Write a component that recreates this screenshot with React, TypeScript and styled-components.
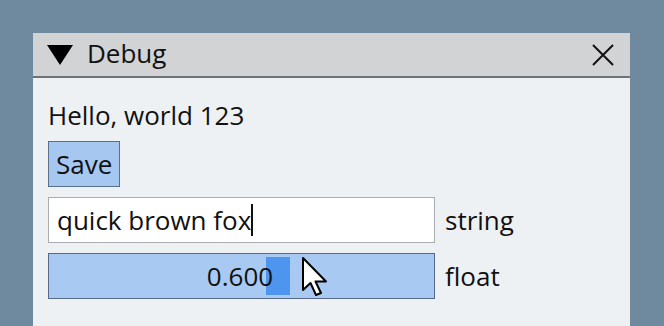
import React from "react";
import styled, { createGlobalStyle } from "styled-components";

const Global = createGlobalStyle`
  *, *::before, *::after { box-sizing: border-box; }
  html, body { margin: 0; padding: 0; }
  body {
    background: #6f8a9e;
    width: 664px;
    height: 326px;
    overflow: hidden;
    font-family: "Open Sans", "Noto Sans", sans-serif;
  }
`;

const Page = styled.div`
  padding: 33px 0 0 33px;
`;

const Window = styled.div`
  width: 597px;
  height: 300px;
  display: flex;
  flex-direction: column;
  background: #eef1f4;
`;

const TitleBar = styled.div`
  height: 45px;
  background: #d1d3d5;
  border-bottom: 2px solid #6f7377;
  display: flex;
  align-items: center;
  padding: 0 16px 0 14px;
  color: #111;
`;

const Triangle = styled.svg`
  width: 26px;
  height: 20px;
  margin-right: 14px;
`;

const Title = styled.span`
  font-size: 26px;
  flex: 1;
  line-height: 1;
  margin-top: -3px;
`;

const Close = styled.svg`
  width: 22px;
  height: 22px;
`;

const Body = styled.div`
  padding: 20px 15px 0 15px;
  display: flex;
  flex-direction: column;
  gap: 10px;
  font-size: 26px;
  color: #111;
`;

const TextLine = styled.div`
  line-height: 34px;
  height: 34px;
  margin-bottom: -1px;
`;

const Button = styled.div`
  align-self: flex-start;
  height: 46px;
  padding: 0 7px;
  background: #a6c8f0;
  border: 1px solid #59718f;
  display: flex;
  align-items: center;
`;

const Row = styled.div`
  display: flex;
  align-items: center;
  gap: 10px;
`;

const Field = styled.div<{ $variant: "text" | "slider" }>`
  position: relative;
  width: 387px;
  height: 46px;
  display: flex;
  align-items: center;
  justify-content: ${(p) => (p.$variant === "slider" ? "center" : "flex-start")};
  padding: ${(p) => (p.$variant === "slider" ? "0" : "0 8px")};
  background: ${(p) => (p.$variant === "slider" ? "#a8c9f1" : "#ffffff")};
  border: 1px solid ${(p) => (p.$variant === "slider" ? "#56698a" : "#a9adb2")};
`;

const Caret = styled.span`
  display: inline-block;
  width: 2px;
  height: 32px;
  background: #111;
`;

const Grab = styled.div`
  position: absolute;
  left: 217px;
  top: 3px;
  width: 24px;
  height: 38px;
  background: #4d95ee;
`;

const Value = styled.span`
  position: relative;
  margin-left: -3px;
`;

const Cursor = styled.svg`
  position: absolute;
  left: 252px;
  top: 2px;
  width: 30px;
  height: 42px;
`;

const Label = styled.span`
  line-height: 1;
`;

export default function App() {
  return (
    <>
      <Global />
      <Page>
        <Window>
          <TitleBar>
            <Triangle viewBox="0 0 26 20">
              <polygon points="0,0 26,0 13,20" fill="#000" />
            </Triangle>
            <Title>Debug</Title>
            <Close viewBox="0 0 22 22">
              <path d="M1 1 L21 21 M21 1 L1 21" stroke="#111" strokeWidth="2" />
            </Close>
          </TitleBar>
          <Body>
            <TextLine>Hello, world 123</TextLine>
            <Button>Save</Button>
            <Row>
              <Field $variant="text">
                <span>quick brown fox</span>
                <Caret />
              </Field>
              <Label>string</Label>
            </Row>
            <Row>
              <Field $variant="slider">
                <Grab />
                <Value>0.600</Value>
                <Cursor viewBox="0 0 30 42">
                  <path
                    d="M2 2 L2 34 L9.5 27 L15 39 L20 37 L14.5 25.5 L25 25.5 Z"
                    fill="#fff"
                    stroke="#000"
                    strokeWidth="2"
                    strokeLinejoin="round"
                  />
                </Cursor>
              </Field>
              <Label>float</Label>
            </Row>
          </Body>
        </Window>
      </Page>
    </>
  );
}
